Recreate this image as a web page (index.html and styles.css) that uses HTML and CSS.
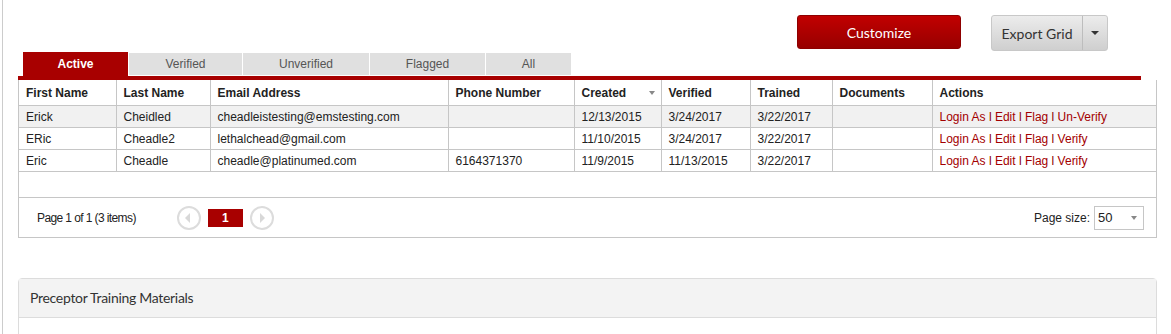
FILE: index.html
```html
<!DOCTYPE html>
<html lang="en">
<head>
  <meta charset="UTF-8">
  <title>Preceptors</title>
  <link rel="stylesheet" href="styles.css">
</head>
<body>
  <div class="page">
    <div class="toolbar">
      <button class="btn-customize">Customize</button>
      <div class="btn-split">
        <button class="btn-export">Export Grid</button>
        <button class="btn-caret"><span class="caret"></span></button>
      </div>
    </div>

    <div class="tabs">
      <div class="tab active">Active</div>
      <div class="tab t-verified">Verified</div>
      <div class="tab t-unverified">Unverified</div>
      <div class="tab t-flagged">Flagged</div>
      <div class="tab t-all">All</div>
    </div>

    <div class="grid">
      <table>
        <colgroup>
          <col style="width:97px">
          <col style="width:94px">
          <col style="width:238px">
          <col style="width:126px">
          <col style="width:87px">
          <col style="width:89px">
          <col style="width:82px">
          <col style="width:100px">
          <col>
        </colgroup>
        <thead>
          <tr>
            <th>First Name</th>
            <th>Last Name</th>
            <th>Email Address</th>
            <th>Phone Number</th>
            <th class="sorted">Created <span class="sort-caret"></span></th>
            <th>Verified</th>
            <th>Trained</th>
            <th>Documents</th>
            <th>Actions</th>
          </tr>
        </thead>
        <tbody>
          <tr class="focused">
            <td>Erick</td>
            <td>Cheidled</td>
            <td>cheadleistesting@emstesting.com</td>
            <td></td>
            <td>12/13/2015</td>
            <td>3/24/2017</td>
            <td>3/22/2017</td>
            <td></td>
            <td class="actions"><a>Login As</a> l <a>Edit</a> l <a>Flag</a> l <a>Un-Verify</a></td>
          </tr>
          <tr>
            <td>ERic</td>
            <td>Cheadle2</td>
            <td>lethalchead@gmail.com</td>
            <td></td>
            <td>11/10/2015</td>
            <td>3/24/2017</td>
            <td>3/22/2017</td>
            <td></td>
            <td class="actions"><a>Login As</a> l <a>Edit</a> l <a>Flag</a> l <a>Verify</a></td>
          </tr>
          <tr>
            <td>Eric</td>
            <td>Cheadle</td>
            <td>cheadle@platinumed.com</td>
            <td>6164371370</td>
            <td>11/9/2015</td>
            <td>11/13/2015</td>
            <td>3/22/2017</td>
            <td></td>
            <td class="actions"><a>Login As</a> l <a>Edit</a> l <a>Flag</a> l <a>Verify</a></td>
          </tr>
          <tr class="empty"><td colspan="9"></td></tr>
        </tbody>
      </table>
      <div class="pager">
        <span class="pager-info">Page 1 of 1 (3 items)</span>
        <span class="pager-arrow"><span class="tri-left"></span></span>
        <span class="pager-page">1</span>
        <span class="pager-arrow"><span class="tri-right"></span></span>
        <span class="pager-size">Page size:</span>
        <span class="size-box">50 <span class="sort-caret"></span></span>
      </div>
    </div>

    <div class="panel">
      <div class="panel-heading">Preceptor Training Materials</div>
    </div>
  </div>
</body>
</html>
```

FILE: styles.css
```css
body {
  margin: 0;
  padding-left: 2px;
  background: #fff;
  font-family: "Liberation Sans", Arial, sans-serif;
  font-size: 12px;
  color: #222;
}
.page {
  border-left: 1px solid #ccc;
  padding: 15px 15px 0 15px;
  min-height: 319px;
  box-sizing: border-box;
  width: 1154px;
}
.toolbar {
  display: flex;
  justify-content: flex-end;
  gap: 30px;
  padding-right: 33px;
  height: 34px;
}
.toolbar button {
  font-family: Lato, "Open Sans", sans-serif;
  font-size: 14px;
  cursor: pointer;
}
.btn-customize {
  width: 164px;
  height: 34px;
  border: 1px solid #8e0000;
  border-radius: 3px;
  color: #fff;
  background: linear-gradient(#c10000, #970000);
}
.btn-split {
  display: flex;
  height: 34px;
  border: 1px solid #c8c8c8;
  border-radius: 3px;
  background: linear-gradient(#ececec, #cfcfcf);
  overflow: hidden;
}
.btn-export {
  width: 91px;
  border: none;
  border-right: 1px solid #bdbdbd;
  background: transparent;
  color: #333;
}
.btn-caret {
  width: 24px;
  border: none;
  background: transparent;
  display: flex;
  align-items: center;
  justify-content: center;
}
.caret {
  border-left: 4px solid transparent;
  border-right: 4px solid transparent;
  border-top: 4px solid #333;
}
.tabs {
  display: flex;
  gap: 1px;
  margin-top: 3px;
  padding-left: 5px;
  align-items: flex-end;
  height: 24px;
  border-bottom: 4px solid #a80000;
}
.tab {
  height: 22px;
  line-height: 22px;
  margin-bottom: 1px;
  text-align: center;
  background: #e0e0e0;
  color: #555;
}
.tab.active {
  height: 24px;
  line-height: 24px;
  margin-bottom: 0;
  width: 105px;
  background: #a80000;
  color: #fff;
  font-weight: bold;
}
.t-verified { width: 113px; }
.t-unverified { width: 126px; }
.t-flagged { width: 115px; }
.t-all { width: 85px; }
.grid {
  border: 1px solid #c6c6c6;
  border-top: none;
  width: 1137px;
}
table {
  width: 100%;
  border-collapse: collapse;
  table-layout: fixed;
}
th, td {
  border: 1px solid #c6c6c6;
  padding: 0 7px;
  text-align: left;
  white-space: nowrap;
  overflow: hidden;
}
th:first-child, td:first-child { border-left: none; }
th:last-child, td:last-child { border-right: none; }
thead th {
  border-top: none;
  height: 25px;
  font-weight: bold;
  color: #222;
}
.sorted { position: relative; }
.sort-caret {
  display: inline-block;
  border-left: 3.5px solid transparent;
  border-right: 3.5px solid transparent;
  border-top: 4px solid #888;
  vertical-align: middle;
}
.sorted .sort-caret {
  position: absolute;
  right: 6px;
  top: 11px;
}
tbody td {
  height: 21px;
  color: #222;
}
tbody tr.focused td { background: #f1f1f1; }
tbody tr.empty td { height: 25px; }
.actions { color: #8a0000; }
.actions a { color: #a30000; }
.pager {
  display: flex;
  align-items: center;
  height: 39px;
  padding: 0 12px 0 18px;
}
.pager-info {
  letter-spacing: -0.6px;
  margin-right: 41px;
}
.pager-arrow {
  width: 20px;
  height: 20px;
  border: 2px solid #dcdcdc;
  border-radius: 50%;
  display: flex;
  align-items: center;
  justify-content: center;
}
.tri-left {
  border-top: 5px solid transparent;
  border-bottom: 5px solid transparent;
  border-right: 5px solid #d8d8d8;
  margin-right: 2px;
}
.tri-right {
  border-top: 5px solid transparent;
  border-bottom: 5px solid transparent;
  border-left: 5px solid #d8d8d8;
  margin-left: 2px;
}
.pager-page {
  width: 35px;
  height: 18px;
  line-height: 18px;
  margin: 0 7px;
  text-align: center;
  background: #a80000;
  color: #fff;
  font-weight: bold;
}
.pager-size { margin-left: auto; margin-right: 4px; }
.size-box {
  width: 39px;
  height: 22px;
  border: 1px solid #c6c6c6;
  display: flex;
  align-items: center;
  justify-content: space-between;
  padding: 0 6px 0 3px;
  font-size: 13px;
}
.panel {
  margin-top: 40px;
  width: 1137px;
  border: 1px solid #dcdcdc;
  border-radius: 4px 4px 0 0;
  height: 60px;
}
.panel-heading {
  height: 38px;
  line-height: 38px;
  padding-left: 11px;
  background: #f3f3f3;
  border-bottom: 1px solid #dcdcdc;
  font-family: Lato, "Open Sans", sans-serif;
  font-size: 14px;
  letter-spacing: -0.3px;
  color: #333;
}
```
